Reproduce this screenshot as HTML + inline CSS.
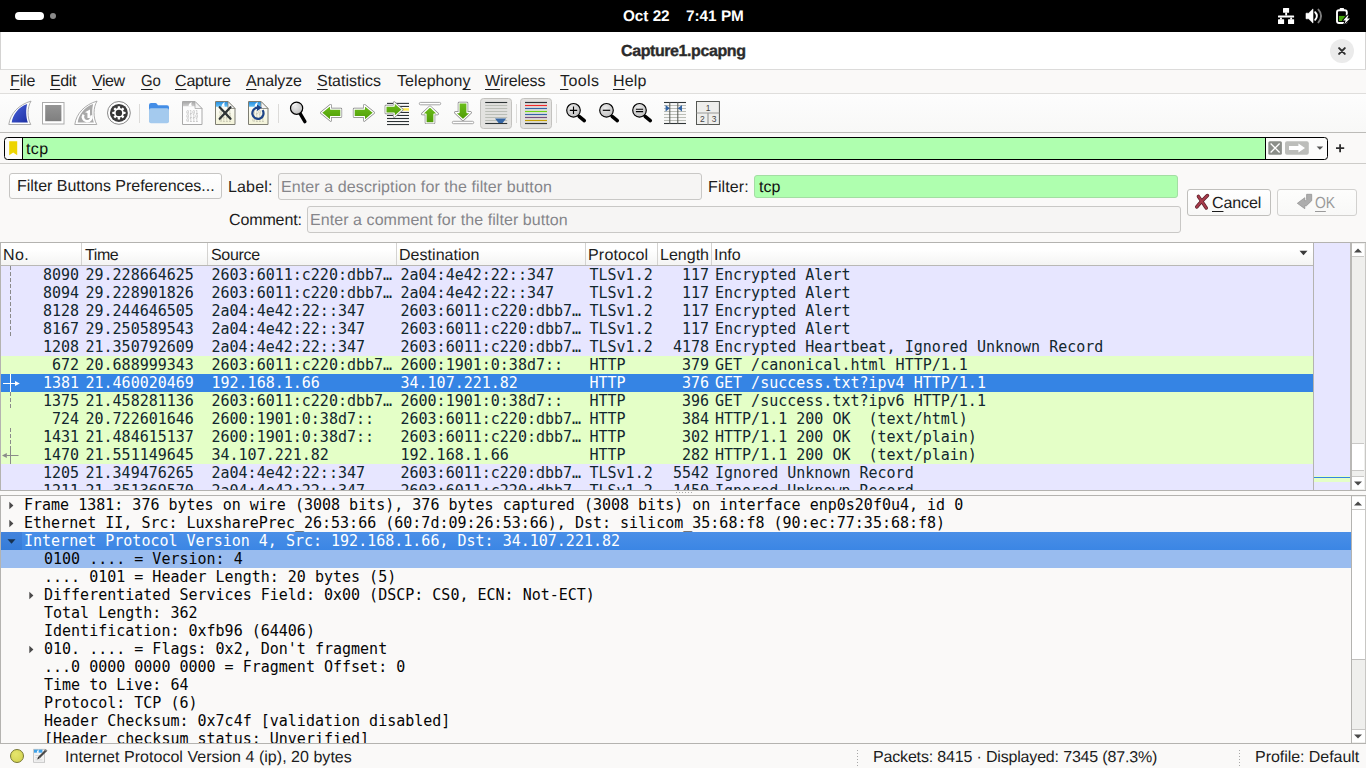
<!DOCTYPE html>
<html lang="en"><head><meta charset="utf-8"><title>Capture1.pcapng</title>
<style>
html,body{margin:0;padding:0}
body{width:1366px;height:768px;overflow:hidden;position:relative;background:#faf9f8;font-family:"Liberation Sans",sans-serif;}
body div,body span.t,body svg{position:absolute;box-sizing:border-box}
.t{white-space:pre;line-height:20px;height:20px;transform:rotate(0.03deg);transform-origin:0 15px}
.t u{text-decoration:underline;text-underline-offset:2.5px;text-decoration-thickness:1px}
.m{font-family:"DejaVu Sans Mono","Liberation Mono",monospace;font-size:15px;line-height:18px;white-space:pre;color:#12272e}
.row{left:1px;height:18px;overflow:hidden}
.row span{position:absolute;top:0;height:18px}
.lav{background:#e7e6ff}.grn{background:#e4ffc7}
</style></head><body>

<div style="left:0px;top:0px;width:1366px;height:32px;background:#000"></div>
<div style="left:15px;top:12px;width:29px;height:8px;background:#fff;border-radius:4px"></div>
<div style="left:50px;top:13px;width:6px;height:6px;background:#8a8a8a;border-radius:50%"></div>
<svg style="left:1276px;top:6px;" width="76" height="20" viewBox="1276 6 76 20"><rect x="1283" y="8" width="6.1" height="4.7" rx="0.5" fill="#fff"/><rect x="1285.2" y="12.6" width="1.9" height="3" rx="0.5" fill="#fff"/><rect x="1278" y="15.5" width="16.1" height="2" rx="0.5" fill="#fff"/><rect x="1280" y="17.4" width="1.9" height="2" rx="0.5" fill="#fff"/><rect x="1290.2" y="17.4" width="1.9" height="2" rx="0.5" fill="#fff"/><rect x="1278" y="19.2" width="6.1" height="4.8" rx="0.5" fill="#fff"/><rect x="1288" y="19.2" width="6.1" height="4.8" rx="0.5" fill="#fff"/><path d="M1306,13.2 h2.6 l4.4,-4.3 v14.2 l-4.4,-4.3 h-2.6 z" fill="#fff" stroke="#fff" stroke-width="0.6" stroke-linejoin="round"/><path d="M1315.2,12.2 a5.2,5.2 0 0 1 0,7.6" fill="none" stroke="#fff" stroke-width="1.9" stroke-linecap="round"/><path d="M1318.4,9.6 a9,9 0 0 1 0,12.8" fill="none" stroke="#7e7e7e" stroke-width="1.9" stroke-linecap="round"/><rect x="1339.8" y="8" width="4.2" height="2.4" rx="0.6" fill="#fff"/><rect x="1337" y="10.3" width="9.8" height="12.7" rx="2" fill="#000" stroke="#fff" stroke-width="1.9"/><path d="M1338.9,15.9 h6 v5.2 h-6 z" fill="#43a30b"/><path d="M1347.6,15.4 L1343.1,20.5 H1345.7 L1344.3,24.2 L1350,18.6 H1347.2 L1348.6,15.4 Z" fill="#000" stroke="#000" stroke-width="2" stroke-linejoin="round"/><path d="M1347.6,15.4 L1343.1,20.5 H1345.7 L1344.3,24.2 L1350,18.6 H1347.2 L1348.6,15.4 Z" fill="#fff"/></svg>
<span class="t" style="left:622.60px;top:6.00px;font-size:15.3px;font-weight:bold;color:#fff;letter-spacing:-0.031px;">Oct 22</span>
<span class="t" style="left:686.20px;top:6.00px;font-size:15.3px;font-weight:bold;color:#fff;letter-spacing:0.005px;">7:41 PM</span>
<div style="left:0px;top:32px;width:1366px;height:38px;background:#fff;border-bottom:1px solid #dcdbda;border-left:1px solid #d4d3d2;border-right:1px solid #d4d3d2"></div>
<span class="t" style="left:620.80px;top:41.00px;font-size:16px;font-weight:bold;color:#2b2b2b;letter-spacing:-0.408px;-webkit-text-stroke:0.35px #2b2b2b;">Capture1.pcapng</span>
<div style="left:1330px;top:39px;width:24px;height:24px;background:#ebebeb;border-radius:50%"></div>
<svg style="left:1330px;top:39px" width="24" height="24" viewBox="0 0 24 24"><path d="M9.1 9.15 L14.8 14.85 M14.8 9.15 L9.1 14.85" stroke="#2e2e2e" stroke-width="2" stroke-linecap="round" fill="none"/></svg>
<div style="left:0px;top:70px;width:1366px;height:24px;background:#faf9f8;border-bottom:1px solid #dfdedc"></div>
<span class="t" style="left:9.50px;top:71.00px;font-size:16px;color:#1e1e1e;letter-spacing:-0.128px;"><u>F</u>ile</span>
<span class="t" style="left:49.50px;top:71.00px;font-size:16px;color:#1e1e1e;letter-spacing:-0.375px;"><u>E</u>dit</span>
<span class="t" style="left:91.50px;top:71.00px;font-size:16px;color:#1e1e1e;letter-spacing:-0.445px;"><u>V</u>iew</span>
<span class="t" style="left:140.50px;top:71.00px;font-size:16px;color:#1e1e1e;letter-spacing:0.000px;transform:rotate(0.03deg) scaleX(0.9326);transform-origin:0.0px 15px;"><u>G</u>o</span>
<span class="t" style="left:175.00px;top:71.00px;font-size:16px;color:#1e1e1e;letter-spacing:-0.171px;"><u>C</u>apture</span>
<span class="t" style="left:246.00px;top:71.00px;font-size:16px;color:#1e1e1e;letter-spacing:-0.171px;"><u>A</u>nalyze</span>
<span class="t" style="left:317.00px;top:71.00px;font-size:16px;color:#1e1e1e;letter-spacing:-0.002px;"><u>S</u>tatistics</span>
<span class="t" style="left:396.50px;top:71.00px;font-size:16px;color:#1e1e1e;letter-spacing:0.069px;">Telephon<u>y</u></span>
<span class="t" style="left:484.50px;top:71.00px;font-size:16px;color:#1e1e1e;letter-spacing:-0.119px;"><u>W</u>ireless</span>
<span class="t" style="left:559.50px;top:71.00px;font-size:16px;color:#1e1e1e;letter-spacing:0.412px;"><u>T</u>ools</span>
<span class="t" style="left:612.50px;top:71.00px;font-size:16px;color:#1e1e1e;letter-spacing:0.164px;"><u>H</u>elp</span>
<div style="left:0px;top:94px;width:1366px;height:39px;background:linear-gradient(#fdfdfd,#f8f8f7);border-bottom:1px solid #bcbbb8"></div>
<svg style="left:0px;top:95px;" width="730" height="37" viewBox="0 95 730 37"><defs>
<linearGradient id="gBlue" x1="0" y1="0" x2="1" y2="1"><stop offset="0" stop-color="#4a64de"/><stop offset="1" stop-color="#1d2fa2"/></linearGradient>
<linearGradient id="gGray" x1="0" y1="0" x2="0" y2="1"><stop offset="0" stop-color="#949494"/><stop offset="1" stop-color="#7f7f7f"/></linearGradient>
<linearGradient id="gGreen" x1="0" y1="0" x2="0" y2="1"><stop offset="0" stop-color="#6cbf1a"/><stop offset="1" stop-color="#4e9a06"/></linearGradient>
<linearGradient id="gGreenH" x1="0" y1="0" x2="1" y2="0"><stop offset="0" stop-color="#6cbf1a"/><stop offset="1" stop-color="#56a50b"/></linearGradient>
<linearGradient id="gCream" x1="0" y1="0" x2="0" y2="1"><stop offset="0" stop-color="#ffffff"/><stop offset="1" stop-color="#f3f3d8"/></linearGradient>
<linearGradient id="gSky" x1="0" y1="0" x2="0" y2="1"><stop offset="0" stop-color="#2a8fe0"/><stop offset="1" stop-color="#62c0f6"/></linearGradient>
<linearGradient id="gBand" x1="0" y1="0" x2="0" y2="1"><stop offset="0" stop-color="#a9a9a9"/><stop offset="1" stop-color="#cfcfcf"/></linearGradient>
<radialGradient id="gLens" cx="0.4" cy="0.35" r="0.7"><stop offset="0" stop-color="#ececec"/><stop offset="1" stop-color="#bdbdbd"/></radialGradient>
</defs><path d="M8.8,124.5 C10.2,113.5 19,104.5 31.05,101.1 C27.2,107 27,118 30.8,124.5 Z" fill="#fff" stroke="#a3a3a3" stroke-width="0.9" stroke-linejoin="round"/><path d="M11.7,122.6 C12.8,114.5 18.5,107 27.2,104 C25.8,109 25.8,117 27.9,122.6 Z" fill="url(#gBlue)"/><rect x="42.5" y="102.5" width="21.5" height="21.5" fill="#fff" stroke="#ababab" stroke-width="1"/><rect x="45.2" y="105" width="16.2" height="16.2" fill="url(#gGray)"/><path d="M74.8,124.5 C76.2,113.5 85,104.5 97.05,101.1 C93.2,107 93,118 96.8,124.5 Z" fill="#fff" stroke="#a3a3a3" stroke-width="0.9" stroke-linejoin="round"/><path d="M77.7,122.6 C78.8,114.5 84.5,107 93.2,104 C91.8,109 91.8,117 93.9,122.6 Z" fill="#a9a9a9"/><path d="M83.6,114.6 A4.3,4.3 0 1 0 91.2,115.4" fill="none" stroke="#fff" stroke-width="2.5"/><path d="M88.7,118 V111.4" stroke="#fff" stroke-width="2.5"/><path d="M90,109.6 l-5,2.6 l5,1.6 z" fill="#fff"/><circle cx="118.9" cy="112.9" r="11.4" fill="#fff" stroke="#6a6a6a" stroke-width="0.8"/><circle cx="118.9" cy="112.9" r="9" fill="#3a3a3a"/><rect x="117.7" y="106.30000000000001" width="2.4" height="3" rx="0.5" fill="#fff" transform="rotate(0 118.9 112.9)"/><rect x="117.7" y="106.30000000000001" width="2.4" height="3" rx="0.5" fill="#fff" transform="rotate(45 118.9 112.9)"/><rect x="117.7" y="106.30000000000001" width="2.4" height="3" rx="0.5" fill="#fff" transform="rotate(90 118.9 112.9)"/><rect x="117.7" y="106.30000000000001" width="2.4" height="3" rx="0.5" fill="#fff" transform="rotate(135 118.9 112.9)"/><rect x="117.7" y="106.30000000000001" width="2.4" height="3" rx="0.5" fill="#fff" transform="rotate(180 118.9 112.9)"/><rect x="117.7" y="106.30000000000001" width="2.4" height="3" rx="0.5" fill="#fff" transform="rotate(225 118.9 112.9)"/><rect x="117.7" y="106.30000000000001" width="2.4" height="3" rx="0.5" fill="#fff" transform="rotate(270 118.9 112.9)"/><rect x="117.7" y="106.30000000000001" width="2.4" height="3" rx="0.5" fill="#fff" transform="rotate(315 118.9 112.9)"/><circle cx="118.9" cy="112.9" r="4.9" fill="#fff"/><circle cx="118.9" cy="112.9" r="3.2" fill="#333"/><path d="M139.5,104 v19" stroke="#dcdbd9" stroke-width="1"/><path d="M278.5,104 v19" stroke="#dcdbd9" stroke-width="1"/><path d="M516.5,104 v19" stroke="#dcdbd9" stroke-width="1"/><path d="M556.5,104 v19" stroke="#dcdbd9" stroke-width="1"/><path d="M149,105 a2,2 0 0 1 2,-2 h4.3 a2,2 0 0 1 1.6,0.8 l1,1.4 h9.1 a2,2 0 0 1 2,2 v6 h-20 z" fill="#438de6"/><rect x="149" y="108.2" width="20" height="15.1" rx="2" fill="#a4caee"/><path d="M182.5,101.5 h12.5 l7,7 v16 h-19.5 z" fill="#fdfdfd" stroke="#a9a9a9" stroke-width="1"/><path d="M183,102 h12 l1.5,1.5 v2.8 h-13.5 z" fill="url(#gBand)"/><path d="M188.5,106.3 c0.3,-2.2 1.4,-3.6 3.3,-4.3 c-0.6,1.5 -0.6,3 0.1,4.3 z" fill="#fff"/><path d="M195,101.5 v7 h7 z" fill="#f4f4f4" stroke="#a9a9a9" stroke-width="0.8" stroke-linejoin="round"/><g style="filter:blur(0.3px)"><text x="186.2" y="113.6" font-family="DejaVu Sans Mono,monospace" font-size="5" fill="#b5b5b5">0101</text><text x="186.2" y="117.89999999999999" font-family="DejaVu Sans Mono,monospace" font-size="5" fill="#b5b5b5">0110</text><text x="186.2" y="122.19999999999999" font-family="DejaVu Sans Mono,monospace" font-size="5" fill="#b5b5b5">0111</text></g><path d="M215.5,101.5 h12.5 l7,7 v16 h-19.5 z" fill="url(#gCream)" stroke="#7d7d72" stroke-width="1"/><path d="M216,102 h12 l1.5,1.5 v3.2 h-13.5 z" fill="url(#gSky)"/><path d="M221.5,106.7 c0.3,-2.4 1.4,-4 3.3,-4.7 c-0.6,1.6 -0.6,3.3 0.1,4.7 z" fill="#fff"/><path d="M228,101.5 v7 h7 z" fill="#f4f4f4" stroke="#7d7d72" stroke-width="0.8" stroke-linejoin="round"/><g style="filter:blur(0.3px)"><text x="219.2" y="113.6" font-family="DejaVu Sans Mono,monospace" font-size="5" fill="#b9b9a4">0101</text><text x="219.2" y="117.89999999999999" font-family="DejaVu Sans Mono,monospace" font-size="5" fill="#b9b9a4">0110</text><text x="219.2" y="122.19999999999999" font-family="DejaVu Sans Mono,monospace" font-size="5" fill="#b9b9a4">0111</text></g><path d="M219.7,107.3 L230.5,118.7 M230.5,107.3 L219.7,118.7" stroke="#2e3436" stroke-width="2.3" stroke-linecap="round"/><path d="M248.5,101.5 h12.5 l7,7 v16 h-19.5 z" fill="url(#gCream)" stroke="#7d7d72" stroke-width="1"/><path d="M249,102 h12 l1.5,1.5 v3.2 h-13.5 z" fill="url(#gSky)"/><path d="M254.5,106.7 c0.3,-2.4 1.4,-4 3.3,-4.7 c-0.6,1.6 -0.6,3.3 0.1,4.7 z" fill="#fff"/><path d="M261,101.5 v7 h7 z" fill="#f4f4f4" stroke="#7d7d72" stroke-width="0.8" stroke-linejoin="round"/><g style="filter:blur(0.3px)"><text x="252.2" y="113.6" font-family="DejaVu Sans Mono,monospace" font-size="5" fill="#b9b9a4">0101</text><text x="252.2" y="117.89999999999999" font-family="DejaVu Sans Mono,monospace" font-size="5" fill="#b9b9a4">0110</text><text x="252.2" y="122.19999999999999" font-family="DejaVu Sans Mono,monospace" font-size="5" fill="#b9b9a4">0111</text></g><path d="M262.6,110.2 A5.6,5.6 0 1 1 257.6,107.7" fill="none" stroke="#1d4488" stroke-width="2.2"/><path d="M257,104.4 l5,3.3 l-5,3.3 z" fill="#1d4488"/><path d="M300.2,113.6 L304.9,121.6" stroke="#000" stroke-width="3.4" stroke-linecap="round"/><circle cx="296.6" cy="108.2" r="6.1" fill="url(#gLens)" stroke="#000" stroke-width="1.2"/><path d="M292.6,106.2 a4.4,4.4 0 0 1 4,-2.6" fill="none" stroke="#fff" stroke-width="1"/><path d="M321.4,112.8 L330.6,105.2 V109.1 H340.9 V116.5 H330.6 V120.4 Z" fill="#7e7e7e" stroke="#7e7e7e" stroke-width="2.5" stroke-linejoin="round"/><path d="M321.4,112.8 L330.6,105.2 V109.1 H340.9 V116.5 H330.6 V120.4 Z" fill="url(#gGreen)" stroke="#fff" stroke-width="1.2" stroke-linejoin="round"/><path d="M373.6,112.8 L364.4,105.2 V109.1 H354.1 V116.5 H364.4 V120.4 Z" fill="#7e7e7e" stroke="#7e7e7e" stroke-width="2.5" stroke-linejoin="round"/><path d="M373.6,112.8 L364.4,105.2 V109.1 H354.1 V116.5 H364.4 V120.4 Z" fill="url(#gGreen)" stroke="#fff" stroke-width="1.2" stroke-linejoin="round"/><path d="M387,103.4 H409" stroke="#2e3436" stroke-width="1.1"/><path d="M387,106.42 H409" stroke="#2e3436" stroke-width="1.1"/><path d="M387,109.44000000000001 H409" stroke="#fce94f" stroke-width="2.4"/><path d="M387,112.46000000000001 H409" stroke="#2e3436" stroke-width="1.1"/><path d="M387,115.48 H409" stroke="#2e3436" stroke-width="1.1"/><path d="M387,118.5 H409" stroke="#2e3436" stroke-width="1.1"/><path d="M387,121.52000000000001 H409" stroke="#2e3436" stroke-width="1.1"/><path d="M387,124.54 H409" stroke="#2e3436" stroke-width="1.1"/><path d="M402.2,109.6 L394.2,102.6 V106.1 H385.9 V113 H394.2 V116.6 Z" fill="#7e7e7e" stroke="#7e7e7e" stroke-width="2.5" stroke-linejoin="round"/><path d="M402.2,109.6 L394.2,102.6 V106.1 H385.9 V113 H394.2 V116.6 Z" fill="url(#gGreen)" stroke="#fff" stroke-width="1.2" stroke-linejoin="round"/><rect x="419.3" y="102.4" width="21.4" height="2.4" rx="1.2" fill="#fff" stroke="#8f8f8f" stroke-width="0.8"/><path d="M430,106.8 L437.6,114 H434 V122.8 H426 V114 H422.4 Z" fill="#7e7e7e" stroke="#7e7e7e" stroke-width="2.5" stroke-linejoin="round"/><path d="M430,106.8 L437.6,114 H434 V122.8 H426 V114 H422.4 Z" fill="url(#gGreen)" stroke="#fff" stroke-width="1.2" stroke-linejoin="round"/><path d="M463,119.8 L470.6,112.6 H467 V103 H459 V112.6 H455.4 Z" fill="#7e7e7e" stroke="#7e7e7e" stroke-width="2.5" stroke-linejoin="round"/><path d="M463,119.8 L470.6,112.6 H467 V103 H459 V112.6 H455.4 Z" fill="url(#gGreen)" stroke="#fff" stroke-width="1.2" stroke-linejoin="round"/><rect x="452.3" y="121.3" width="21.4" height="2.4" rx="1.2" fill="#fff" stroke="#8f8f8f" stroke-width="0.8"/><rect x="480.5" y="98.5" width="31" height="30" rx="3" fill="#e3e2e0" stroke="#c3c2bf" stroke-width="1"/><path d="M485.2,102.5 H507.2" stroke="#2e3436" stroke-width="1.1"/><path d="M485.2,105.5 H507.2" stroke="#babdb6" stroke-width="1.1"/><path d="M485.2,108.5 H507.2" stroke="#babdb6" stroke-width="1.1"/><path d="M485.2,111.5 H507.2" stroke="#babdb6" stroke-width="1.1"/><path d="M485.2,114.5 H507.2" stroke="#babdb6" stroke-width="1.1"/><path d="M485.2,117.5 H507.2" stroke="#babdb6" stroke-width="1.1"/><path d="M485.2,120.5 H507.2" stroke="#babdb6" stroke-width="1.1"/><path d="M485.2,123.5 H507.2" stroke="#2e3436" stroke-width="1.1"/><path d="M495,118.4 h11.2 l-3.6,4.6 h-4 z" fill="#3465a4"/><rect x="520.5" y="98.5" width="31" height="30" rx="3" fill="#e3e2e0" stroke="#c3c2bf" stroke-width="1"/><path d="M525,102.5 H547" stroke="#2e3436" stroke-width="1.2"/><path d="M525,105.5 H547" stroke="#ef2929" stroke-width="1.2"/><path d="M525,108.5 H547" stroke="#3465a4" stroke-width="1.2"/><path d="M525,111.5 H547" stroke="#73d216" stroke-width="1.2"/><path d="M525,114.5 H547" stroke="#3465a4" stroke-width="1.2"/><path d="M525,117.5 H547" stroke="#75507b" stroke-width="1.2"/><path d="M525,120.5 H547" stroke="#c4a000" stroke-width="1.2"/><path d="M525,123.5 H547" stroke="#2e3436" stroke-width="1.2"/><path d="M579.1,116.3 L584.3,120.7" stroke="#000" stroke-width="3.5" stroke-linecap="round"/><circle cx="573.5" cy="110.3" r="6.8" fill="url(#gLens)" stroke="#000" stroke-width="1.15"/><path d="M569.8,110.3 h7.4 M573.5,106.6 v7.4" stroke="#000" stroke-width="1.15"/><path d="M612.1,116.3 L617.3,120.7" stroke="#000" stroke-width="3.5" stroke-linecap="round"/><circle cx="606.5" cy="110.3" r="6.8" fill="url(#gLens)" stroke="#000" stroke-width="1.15"/><path d="M602.8,110.3 h7.4" stroke="#000" stroke-width="1.15"/><path d="M645.1,116.3 L650.3,120.7" stroke="#000" stroke-width="3.5" stroke-linecap="round"/><circle cx="639.5" cy="110.3" r="6.8" fill="url(#gLens)" stroke="#000" stroke-width="1.15"/><path d="M635.9,109.2 h7.2 M635.9,111.6 h7.2" stroke="#000" stroke-width="1.05"/><path d="M664,102.5 H686" stroke="#2e3436" stroke-width="1.1"/><path d="M664,105.5 H686" stroke="#babdb6" stroke-width="1.1"/><path d="M664,108.5 H686" stroke="#babdb6" stroke-width="1.1"/><path d="M664,111.5 H686" stroke="#babdb6" stroke-width="1.1"/><path d="M664,114.5 H686" stroke="#babdb6" stroke-width="1.1"/><path d="M664,117.5 H686" stroke="#babdb6" stroke-width="1.1"/><path d="M664,120.5 H686" stroke="#babdb6" stroke-width="1.1"/><path d="M664,123.5 H686" stroke="#2e3436" stroke-width="1.1"/><path d="M669.8,102 V124 M677.8,102 V124" stroke="#555753" stroke-width="1"/><path d="M665.6,105 l4.2,3.3 l-4.2,3.3 z M682,105 l-4.2,3.3 l4.2,3.3 z" fill="#3465a4"/><rect x="696.5" y="101.5" width="22.9" height="23" fill="#eeeeec" stroke="#555753" stroke-width="1"/><path d="M696.5,113 H719.4 M708,113 V124.5" stroke="#9a9a98" stroke-width="1.2"/><text x="708.2" y="111" font-family="Liberation Sans,sans-serif" font-size="8.5" fill="#444" text-anchor="middle">1</text><text x="702.4" y="122.4" font-family="Liberation Sans,sans-serif" font-size="8.5" fill="#444" text-anchor="middle">2</text><text x="714.2" y="122.4" font-family="Liberation Sans,sans-serif" font-size="8.5" fill="#444" text-anchor="middle">3</text></svg>
<div style="left:0px;top:133px;width:1366px;height:31px;background:#faf9f8;border-bottom:1px solid #cdccc9"></div>
<div style="left:4px;top:137px;width:1324px;height:23px;background:#fcfcfb;border:1px solid #000;border-radius:3.5px;overflow:hidden"><div style="left:17px;top:-1px;width:1244px;height:23px;background:#afffaf;border-left:1px solid #000;border-right:1px solid #000"></div></div>
<span class="t" style="left:25.90px;top:139.00px;font-size:16px;color:#101010;letter-spacing:0.377px;">tcp</span>
<svg style="left:0px;top:136px;" width="1366" height="26" viewBox="0 136 1366 26"><path d="M9.2,141.2 h8 v14 l-4,-2.6 l-4,2.6 z" fill="#edd400"/><rect x="1268.3" y="141.2" width="13.6" height="13.6" rx="1.6" fill="#8b8e89"/><path d="M1270.6,143.5 L1279.6,152.5 M1279.6,143.5 L1270.6,152.5" stroke="#fff" stroke-width="1.3"/><rect x="1285" y="141.2" width="23.8" height="13.6" rx="2" fill="#bcbdba"/><path d="M1289,146 h9.4 v-2.6 l6.6,4.6 l-6.6,4.6 v-2.6 h-9.4 z" fill="#fff"/><path d="M1316.6,146.4 h6.6 l-3.3,3.4 z" fill="#555"/><path d="M1336,148.2 h8.2 M1340.1,144.2 v8" stroke="#2e2e2e" stroke-width="1.8"/></svg>
<div style="left:9px;top:173px;width:213px;height:26px;background:linear-gradient(#fff,#f9f9f8);border:1px solid #c6c5c3;border-radius:3px"></div>
<span class="t" style="left:17.00px;top:176.00px;font-size:16px;color:#1c1c1c;letter-spacing:-0.024px;">Filter Buttons Preferences...</span>
<span class="t" style="left:227.60px;top:177.00px;font-size:16px;color:#1c1c1c;letter-spacing:0.150px;">Label:</span>
<div style="left:278px;top:173px;width:424px;height:27px;background:#f6f5f4;border:1px solid #c9c8c6;border-radius:3px"></div>
<span class="t" style="left:280.60px;top:177.00px;font-size:16px;color:#85858a;letter-spacing:0.100px;">Enter a description for the filter button</span>
<span class="t" style="left:707.70px;top:177.00px;font-size:16px;color:#1c1c1c;letter-spacing:0.108px;">Filter:</span>
<div style="left:754px;top:175px;width:424px;height:23px;background:#afffaf;border:1px solid #a3dea3;border-radius:3px"></div>
<span class="t" style="left:759.30px;top:177.00px;font-size:16px;color:#101010;letter-spacing:0.077px;">tcp</span>
<span class="t" style="left:228.60px;top:210.00px;font-size:16px;color:#1c1c1c;letter-spacing:-0.122px;">Comment:</span>
<div style="left:307px;top:206px;width:874px;height:27px;background:#f6f5f4;border:1px solid #c9c8c6;border-radius:3px"></div>
<span class="t" style="left:309.80px;top:210.00px;font-size:16px;color:#85858a;letter-spacing:0.066px;">Enter a comment for the filter button</span>
<div style="left:1187px;top:189px;width:84px;height:27px;background:linear-gradient(#fff,#f8f8f7);border:1px solid #c0bfbc;border-radius:3px"></div>
<span class="t" style="left:1212.30px;top:193.00px;font-size:16px;color:#1c1c1c;letter-spacing:-0.090px;"><u>C</u>ancel</span>
<div style="left:1277px;top:189px;width:80px;height:27px;background:linear-gradient(#fdfdfc,#f8f8f7);border:1px solid #d2d1cf;border-radius:3px"></div>
<span class="t" style="left:1314.50px;top:193.00px;font-size:16px;color:#9a9a9a;letter-spacing:0.000px;transform:rotate(0.03deg) scaleX(0.8701);transform-origin:0.0px 15px;"><u>O</u>K</span>
<svg style="left:1190px;top:190px;" width="170" height="26" viewBox="1190 190 170 26"><path d="M1207.4,195.6 C1204,199 1200,203 1196.8,206.9" stroke="#5c1f28" stroke-width="3.6" stroke-linecap="round" fill="none"/><path d="M1198.4,196.4 C1201,200 1203.6,204 1206.3,208" stroke="#5c1f28" stroke-width="3.4" stroke-linecap="round" fill="none"/><path d="M1207.4,195.6 C1204,199 1200,203 1196.8,206.9" stroke="#a83c4c" stroke-width="2.1" stroke-linecap="round" fill="none"/><path d="M1198.4,196.4 C1201,200 1203.6,204 1206.3,208" stroke="#a83c4c" stroke-width="2" stroke-linecap="round" fill="none"/><path d="M1306.6,194.3 h5.1 v6.4 l-5.2,5 h-1.7 v3 l-7.5,-5.4 l7.5,-5.6 v3 h0.8 l1,-1 z" fill="#adadad" stroke="#8e8e8e" stroke-width="0.7" stroke-linejoin="round"/></svg>
<div style="left:0px;top:242px;width:1314px;height:249px;background:#fff;border:1px solid #b4b3b0;border-right:1px solid #b4b3b0"></div>
<div style="left:1px;top:243px;width:1312px;height:23px;background:linear-gradient(#ffffff 30%,#f4f4f3);border-bottom:1px solid #b9b8b5"></div>
<span class="t" style="left:2.70px;top:245.00px;font-size:16px;color:#1c1c1c;letter-spacing:0.448px;">No.</span>
<span class="t" style="left:84.65px;top:245.00px;font-size:16px;color:#1c1c1c;letter-spacing:-0.404px;">Time</span>
<div style="left:81px;top:243px;width:1px;height:22px;background:#d4d3d1"></div>
<span class="t" style="left:210.50px;top:245.00px;font-size:16px;color:#1c1c1c;letter-spacing:-0.319px;">Source</span>
<div style="left:207px;top:243px;width:1px;height:22px;background:#d4d3d1"></div>
<span class="t" style="left:398.75px;top:245.00px;font-size:16px;color:#1c1c1c;letter-spacing:0.040px;">Destination</span>
<div style="left:396px;top:243px;width:1px;height:22px;background:#d4d3d1"></div>
<span class="t" style="left:587.50px;top:245.00px;font-size:16px;color:#1c1c1c;letter-spacing:0.194px;">Protocol</span>
<div style="left:585px;top:243px;width:1px;height:22px;background:#d4d3d1"></div>
<span class="t" style="left:660.00px;top:245.00px;font-size:16px;color:#1c1c1c;letter-spacing:0.012px;">Length</span>
<div style="left:657px;top:243px;width:1px;height:22px;background:#d4d3d1"></div>
<span class="t" style="left:713.70px;top:245.00px;font-size:16px;color:#1c1c1c;letter-spacing:0.004px;">Info</span>
<div style="left:711px;top:243px;width:1px;height:22px;background:#d4d3d1"></div>
<svg style="left:1299px;top:250px" width="9" height="6" viewBox="0 0 9 6"><path d="M0.5 0.8h8l-4 4.4z" fill="#3a3a3a"/></svg>
<div style="left:0;top:266px;width:1313px;height:224px;overflow:hidden">
<div class="row m lav" style="top:0px;width:1312px;"><span style="left:0;width:78px;text-align:right">8090</span><span style="left:84.5px">29.228664625</span><span style="left:210.5px">2603:6011:c220:dbb7…</span><span style="left:399.5px">2a04:4e42:22::347</span><span style="left:588.5px">TLSv1.2</span><span style="left:640px;width:68px;text-align:right">117</span><span style="left:714px">Encrypted Alert</span></div>
<div class="row m lav" style="top:18px;width:1312px;"><span style="left:0;width:78px;text-align:right">8094</span><span style="left:84.5px">29.228901826</span><span style="left:210.5px">2603:6011:c220:dbb7…</span><span style="left:399.5px">2a04:4e42:22::347</span><span style="left:588.5px">TLSv1.2</span><span style="left:640px;width:68px;text-align:right">117</span><span style="left:714px">Encrypted Alert</span></div>
<div class="row m lav" style="top:36px;width:1312px;"><span style="left:0;width:78px;text-align:right">8128</span><span style="left:84.5px">29.244646505</span><span style="left:210.5px">2a04:4e42:22::347</span><span style="left:399.5px">2603:6011:c220:dbb7…</span><span style="left:588.5px">TLSv1.2</span><span style="left:640px;width:68px;text-align:right">117</span><span style="left:714px">Encrypted Alert</span></div>
<div class="row m lav" style="top:54px;width:1312px;"><span style="left:0;width:78px;text-align:right">8167</span><span style="left:84.5px">29.250589543</span><span style="left:210.5px">2a04:4e42:22::347</span><span style="left:399.5px">2603:6011:c220:dbb7…</span><span style="left:588.5px">TLSv1.2</span><span style="left:640px;width:68px;text-align:right">117</span><span style="left:714px">Encrypted Alert</span></div>
<div class="row m lav" style="top:72px;width:1312px;"><span style="left:0;width:78px;text-align:right">1208</span><span style="left:84.5px">21.350792609</span><span style="left:210.5px">2a04:4e42:22::347</span><span style="left:399.5px">2603:6011:c220:dbb7…</span><span style="left:588.5px">TLSv1.2</span><span style="left:640px;width:68px;text-align:right">4178</span><span style="left:714px">Encrypted Heartbeat, Ignored Unknown Record</span></div>
<div class="row m grn" style="top:90px;width:1312px;"><span style="left:0;width:78px;text-align:right">672</span><span style="left:84.5px">20.688999343</span><span style="left:210.5px">2603:6011:c220:dbb7…</span><span style="left:399.5px">2600:1901:0:38d7::</span><span style="left:588.5px">HTTP</span><span style="left:640px;width:68px;text-align:right">379</span><span style="left:714px">GET /canonical.html HTTP/1.1</span></div>
<div class="row m " style="top:108px;width:1312px;background:#3584e4;color:#fff;"><span style="left:0;width:78px;text-align:right">1381</span><span style="left:84.5px">21.460020469</span><span style="left:210.5px">192.168.1.66</span><span style="left:399.5px">34.107.221.82</span><span style="left:588.5px">HTTP</span><span style="left:640px;width:68px;text-align:right">376</span><span style="left:714px">GET /success.txt?ipv4 HTTP/1.1</span></div>
<div class="row m grn" style="top:126px;width:1312px;"><span style="left:0;width:78px;text-align:right">1375</span><span style="left:84.5px">21.458281136</span><span style="left:210.5px">2603:6011:c220:dbb7…</span><span style="left:399.5px">2600:1901:0:38d7::</span><span style="left:588.5px">HTTP</span><span style="left:640px;width:68px;text-align:right">396</span><span style="left:714px">GET /success.txt?ipv6 HTTP/1.1</span></div>
<div class="row m grn" style="top:144px;width:1312px;"><span style="left:0;width:78px;text-align:right">724</span><span style="left:84.5px">20.722601646</span><span style="left:210.5px">2600:1901:0:38d7::</span><span style="left:399.5px">2603:6011:c220:dbb7…</span><span style="left:588.5px">HTTP</span><span style="left:640px;width:68px;text-align:right">384</span><span style="left:714px">HTTP/1.1 200 OK  (text/html)</span></div>
<div class="row m grn" style="top:162px;width:1312px;"><span style="left:0;width:78px;text-align:right">1431</span><span style="left:84.5px">21.484615137</span><span style="left:210.5px">2600:1901:0:38d7::</span><span style="left:399.5px">2603:6011:c220:dbb7…</span><span style="left:588.5px">HTTP</span><span style="left:640px;width:68px;text-align:right">302</span><span style="left:714px">HTTP/1.1 200 OK  (text/plain)</span></div>
<div class="row m grn" style="top:180px;width:1312px;"><span style="left:0;width:78px;text-align:right">1470</span><span style="left:84.5px">21.551149645</span><span style="left:210.5px">34.107.221.82</span><span style="left:399.5px">192.168.1.66</span><span style="left:588.5px">HTTP</span><span style="left:640px;width:68px;text-align:right">282</span><span style="left:714px">HTTP/1.1 200 OK  (text/plain)</span></div>
<div class="row m lav" style="top:198px;width:1312px;"><span style="left:0;width:78px;text-align:right">1205</span><span style="left:84.5px">21.349476265</span><span style="left:210.5px">2a04:4e42:22::347</span><span style="left:399.5px">2603:6011:c220:dbb7…</span><span style="left:588.5px">TLSv1.2</span><span style="left:640px;width:68px;text-align:right">5542</span><span style="left:714px">Ignored Unknown Record</span></div>
<div class="row m lav" style="top:216px;width:1312px;"><span style="left:0;width:78px;text-align:right">1211</span><span style="left:84.5px">21.351369570</span><span style="left:210.5px">2a04:4e42:22::347</span><span style="left:399.5px">2603:6011:c220:dbb7…</span><span style="left:588.5px">TLSv1.2</span><span style="left:640px;width:68px;text-align:right">1450</span><span style="left:714px">Ignored Unknown Record</span></div>
<svg style="left:0;top:0" width="24" height="224" viewBox="0 0 24 224"><path d="M10.5,0 V72" stroke="#8a8a8a" stroke-width="1" stroke-dasharray="4 2"/><path d="M10.5,108 V126" stroke="#fff" stroke-width="1"/><path d="M3,117.5 H15" stroke="#fff" stroke-width="1"/><path d="M15,115 l4.8,2.5 l-4.8,2.5 z" fill="#fff"/><path d="M10.5,126 V144" stroke="#8a8a8a" stroke-width="1" stroke-dasharray="4 2"/><path d="M10.5,162 V180" stroke="#8a8a8a" stroke-width="1" stroke-dasharray="4 2"/><path d="M10.5,180 V198" stroke="#8a8a8a" stroke-width="1"/><path d="M6.5,189.5 H18.5" stroke="#8a8a8a" stroke-width="1"/><path d="M6.8,187 l-4.8,2.5 l4.8,2.5 z" fill="#8a8a8a"/></svg>
</div>
<div style="left:1314px;top:243px;width:36px;height:247px;background:#e7e6ff"></div>
<div style="left:1314px;top:476px;width:36px;height:1px;background:#e4ffc7"></div>
<div style="left:1314px;top:477px;width:36px;height:1px;background:#3584e4"></div>
<div style="left:1314px;top:478px;width:36px;height:4px;background:#e4ffc7"></div>
<div style="left:1314px;top:490px;width:52px;height:1px;background:#b4b3b0"></div>
<div style="left:1314px;top:242px;width:52px;height:1px;background:#b4b3b0"></div>
<div style="left:1350px;top:243px;width:16px;height:247px;background:#efefed;border-left:2px solid #b9b8b5;border-right:1px solid #c8c7c4"></div>
<div style="left:1352px;top:244px;width:12px;height:13px;background:#fff;border-bottom:1px solid #c9c8c6"></div>
<div style="left:1352px;top:443px;width:12px;height:28px;background:#fff;border-top:1px solid #c9c8c6;border-bottom:1px solid #c9c8c6"></div>
<div style="left:1352px;top:476px;width:12px;height:13px;background:#fff;border-top:1px solid #c9c8c6"></div>
<svg style="left:1354px;top:248px" width="8" height="5" viewBox="0 0 8 5"><path d="M0 4.6L4 0.4L8 4.6z" fill="#4a4a4a"/></svg>
<svg style="left:1354px;top:481px" width="8" height="5" viewBox="0 0 8 5"><path d="M0 0.4L4 4.6L8 0.4z" fill="#4a4a4a"/></svg>
<div style="left:676px;top:492px;width:16px;height:1px;background:repeating-linear-gradient(90deg,#a9a9a9 0 1px,transparent 1px 3px)"></div>
<div style="left:0px;top:495px;width:1366px;height:249px;background:#faf9f8;border:1px solid #b4b3b0;border-right:none"></div>
<div style="left:1px;top:496px;width:1350px;height:247px;overflow:hidden">
<div class="m" style="left:0;top:0px;width:1350px;height:18px;color:#050505;"><svg style="left:8px;top:5px" width="5" height="9" viewBox="0 0 5 9"><path d="M0.3 0.8L4.4 4.5L0.3 8.2z" fill="#4a4a4a"/></svg><span style="position:absolute;left:23px;top:0">Frame 1381: 376 bytes on wire (3008 bits), 376 bytes captured (3008 bits) on interface enp0s20f0u4, id 0</span></div>
<div class="m" style="left:0;top:18px;width:1350px;height:18px;color:#050505;"><svg style="left:8px;top:5px" width="5" height="9" viewBox="0 0 5 9"><path d="M0.3 0.8L4.4 4.5L0.3 8.2z" fill="#4a4a4a"/></svg><span style="position:absolute;left:23px;top:0">Ethernet II, Src: LuxsharePrec_26:53:66 (60:7d:09:26:53:66), Dst: silicom_35:68:f8 (90:ec:77:35:68:f8)</span></div>
<div class="m" style="left:0;top:36px;width:1350px;height:18px;background:linear-gradient(#4a8fe7,#3b86e4);color:#fff;"><div style="left:0;top:0;width:21px;height:18px;background:rgba(20,60,140,0.12)"></div><svg style="left:6px;top:7px" width="9" height="5" viewBox="0 0 9 5"><path d="M0.5 0.3L8.5 0.3L4.5 4.7z" fill="#16304f"/></svg><span style="position:absolute;left:23px;top:0">Internet Protocol Version 4, Src: 192.168.1.66, Dst: 34.107.221.82</span></div>
<div class="m" style="left:0;top:54px;width:1350px;height:18px;background:#99bcef;color:#050505;"><span style="position:absolute;left:43px;top:0">0100 .... = Version: 4</span></div>
<div class="m" style="left:0;top:72px;width:1350px;height:18px;color:#050505;"><span style="position:absolute;left:43px;top:0">.... 0101 = Header Length: 20 bytes (5)</span></div>
<div class="m" style="left:0;top:90px;width:1350px;height:18px;color:#050505;"><svg style="left:28px;top:5px" width="5" height="9" viewBox="0 0 5 9"><path d="M0.3 0.8L4.4 4.5L0.3 8.2z" fill="#4a4a4a"/></svg><span style="position:absolute;left:43px;top:0">Differentiated Services Field: 0x00 (DSCP: CS0, ECN: Not-ECT)</span></div>
<div class="m" style="left:0;top:108px;width:1350px;height:18px;color:#050505;"><span style="position:absolute;left:43px;top:0">Total Length: 362</span></div>
<div class="m" style="left:0;top:126px;width:1350px;height:18px;color:#050505;"><span style="position:absolute;left:43px;top:0">Identification: 0xfb96 (64406)</span></div>
<div class="m" style="left:0;top:144px;width:1350px;height:18px;color:#050505;"><svg style="left:28px;top:5px" width="5" height="9" viewBox="0 0 5 9"><path d="M0.3 0.8L4.4 4.5L0.3 8.2z" fill="#4a4a4a"/></svg><span style="position:absolute;left:43px;top:0">010. .... = Flags: 0x2, Don&#x27;t fragment</span></div>
<div class="m" style="left:0;top:162px;width:1350px;height:18px;color:#050505;"><span style="position:absolute;left:43px;top:0">...0 0000 0000 0000 = Fragment Offset: 0</span></div>
<div class="m" style="left:0;top:180px;width:1350px;height:18px;color:#050505;"><span style="position:absolute;left:43px;top:0">Time to Live: 64</span></div>
<div class="m" style="left:0;top:198px;width:1350px;height:18px;color:#050505;"><span style="position:absolute;left:43px;top:0">Protocol: TCP (6)</span></div>
<div class="m" style="left:0;top:216px;width:1350px;height:18px;color:#050505;"><span style="position:absolute;left:43px;top:0">Header Checksum: 0x7c4f [validation disabled]</span></div>
<div class="m" style="left:0;top:234px;width:1350px;height:18px;color:#050505;"><span style="position:absolute;left:43px;top:0">[Header checksum status: Unverified]</span></div>
</div>
<div style="left:1351px;top:496px;width:15px;height:247px;background:#efefed;border-left:1px solid #b4b3b0;border-right:1px solid #c8c7c4"></div>
<div style="left:1352px;top:497px;width:13px;height:13px;background:#fff;border-bottom:1px solid #c9c8c6"></div>
<div style="left:1352px;top:510px;width:13px;height:150px;background:#fff;border-bottom:1px solid #c0bfbd"></div>
<div style="left:1352px;top:729px;width:13px;height:13px;background:#fff;border-top:1px solid #c9c8c6"></div>
<svg style="left:1354px;top:501px" width="8" height="5" viewBox="0 0 8 5"><path d="M0 4.6L4 0.4L8 4.6z" fill="#4a4a4a"/></svg>
<svg style="left:1354px;top:734px" width="8" height="5" viewBox="0 0 8 5"><path d="M0 0.4L4 4.6L8 0.4z" fill="#4a4a4a"/></svg>
<div style="left:0px;top:744px;width:1366px;height:24px;background:#faf9f8"></div>
<div style="left:10px;top:749px;width:14px;height:14px;background:radial-gradient(circle at 40% 35%,#e6e66e,#d0d04c);border:1px solid #77772f;border-radius:50%"></div>
<svg style="left:32px;top:748px;" width="17" height="16" viewBox="32 748 17 16"><rect x="33.6" y="749.3" width="11" height="13" fill="#f3f3f3" stroke="#bdbdbd" stroke-width="0.8"/><rect x="34" y="749.6" width="8.4" height="3.1" fill="#3fa2e8"/><path d="M36.8,752.7 c0.2,-1.6 0.9,-2.6 2,-3.1 c-0.4,1 -0.4,2.1 0,3.1 z" fill="#fff"/><path d="M35.4,755.5 h5 M35.4,757.7 h3 M35.4,759.9 h7" stroke="#cfcfcf" stroke-width="0.8"/><path d="M45.7,749.2 l1.6,1.5 l-7.2,7.2 l-1.6,-1.5 z" fill="#4a4a4a"/><path d="M38.5,756.4 l1.6,1.5 l-3,1.5 z" fill="#222"/><path d="M45.7,749.2 l1.6,1.5 l-1,1 l-1.6,-1.5 z" fill="#8a8a8a"/></svg>
<span class="t" style="left:65.20px;top:747.00px;font-size:16px;color:#1c1c1c;letter-spacing:0.032px;">Internet Protocol Version 4 (ip), 20 bytes</span>
<span class="t" style="left:872.50px;top:747.00px;font-size:16px;color:#1c1c1c;letter-spacing:-0.171px;">Packets: 8415 · Displayed: 7345 (87.3%)</span>
<span class="t" style="left:1254.60px;top:747.00px;font-size:16px;color:#1c1c1c;letter-spacing:-0.046px;">Profile: Default</span>
<div style="left:857px;top:750px;width:1px;height:17px;background:repeating-linear-gradient(#a8a8a8 0 1px,transparent 1px 3px)"></div>
<div style="left:1239px;top:750px;width:1px;height:17px;background:repeating-linear-gradient(#a8a8a8 0 1px,transparent 1px 3px)"></div>
</body></html>
